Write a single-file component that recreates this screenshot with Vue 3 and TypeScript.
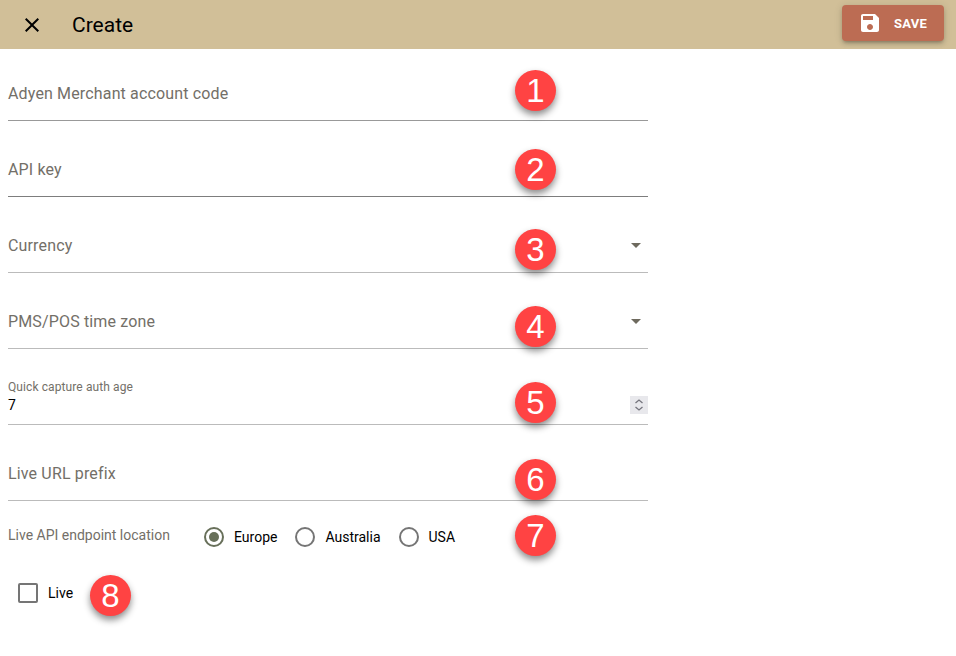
<script setup lang="ts">
interface Field {
  label: string;
  kind: 'text' | 'select' | 'number';
  line: string;
  badge: number;
  badgeBottom: number;
}

const fields: Field[] = [
  { label: 'Adyen Merchant account code', kind: 'text', line: 'mid', badge: 1, badgeBottom: 9 },
  { label: 'API key', kind: 'text', line: 'dark', badge: 2, badgeBottom: 6 },
  { label: 'Currency', kind: 'select', line: 'light', badge: 3, badgeBottom: 2 },
  { label: 'PMS/POS time zone', kind: 'select', line: 'light', badge: 4, badgeBottom: 1 },
  { label: 'Quick capture auth age', kind: 'number', line: 'light', badge: 5, badgeBottom: 1 },
  { label: 'Live URL prefix', kind: 'text', line: 'light', badge: 6, badgeBottom: 0 },
];

const locations = ['Europe', 'Australia', 'USA'];
</script>

<template>
  <div class="page">
    <header class="bar">
      <svg class="close" viewBox="0 0 24 24" width="24" height="24">
        <path d="M19 6.41 17.59 5 12 10.59 6.41 5 5 6.41 10.59 12 5 17.59 6.41 19 12 13.41 17.59 19 19 17.59 13.41 12z" />
      </svg>
      <h1>Create</h1>
      <button class="save">
        <svg viewBox="0 0 24 24" width="24" height="24">
          <path d="M17 3H5c-1.11 0-2 .9-2 2v14c0 1.100.89 2 2 2h14c1.100 0 2-.9 2-2V7l-4-4zm-5 16c-1.660 0-3-1.340-3-3s1.340-3 3-3 3 1.340 3 3-1.340 3-3 3zm3-10H5V5h10v4z" />
        </svg>
        <span>SAVE</span>
      </button>
    </header>

    <form class="form" @submit.prevent>
      <div v-for="f in fields" :key="f.badge" class="field" :class="f.line">
        <template v-if="f.kind === 'number'">
          <div class="stack">
            <label class="small">{{ f.label }}</label>
            <span class="value">7</span>
          </div>
          <span class="spinner">
            <svg viewBox="0 0 18 18" width="18" height="18">
              <path d="M5.500 7 9 4 12.500 7M5.500 11 9 14 12.500 11" />
            </svg>
          </span>
        </template>
        <template v-else>
          <label class="big">{{ f.label }}</label>
          <i v-if="f.kind === 'select'" class="caret"></i>
        </template>
        <b class="badge" :style="{ bottom: f.badgeBottom + 'px' }">{{ f.badge }}</b>
      </div>

      <div class="radios">
        <span class="group-label">Live API endpoint location</span>
        <span v-for="(loc, i) in locations" :key="loc" class="radio">
          <i class="ring" :class="{ on: i === 0 }"></i>{{ loc }}
        </span>
        <b class="badge">7</b>
      </div>

      <div class="live">
        <i class="box"></i>
        <span>Live</span>
        <b class="badge">8</b>
      </div>
    </form>
  </div>
</template>

<style>
html,
body {
  margin: 0;
  background: #fff;
}
</style>

<style scoped>
.page {
  width: 956px;
  height: 656px;
  overflow: hidden;
  font-family: Roboto, "Liberation Sans", sans-serif;
  color: #000;
}
.bar {
  height: 49px;
  background: #d1bf98;
  display: flex;
  align-items: center;
  padding: 0 12px 0 20px;
  box-sizing: border-box;
}
.close {
  fill: #000;
}
h1 {
  margin: 0 0 0 28px;
  font-size: 21px;
  font-weight: 400;
  line-height: 24px;
  flex: 1;
}
.save {
  width: 102px;
  height: 36px;
  margin-top: -3px;
  border: 0;
  border-radius: 4px;
  background: #bc6c53;
  color: #fff;
  display: flex;
  align-items: center;
  padding: 0 0 0 16px;
  gap: 12px;
  font: 700 13px Roboto, sans-serif;
  letter-spacing: 0.3px;
  box-shadow: 0 3px 3px -2px rgba(0, 0, 0, .2), 0 3px 4px rgba(0, 0, 0, .14), 0 1px 8px rgba(0, 0, 0, .12);
}
.save svg {
  fill: #fff;
}
.form {
  width: 640px;
  margin-left: 8px;
  position: relative;
}
.field {
  height: 76px;
  box-sizing: border-box;
  border-bottom: 1px solid #bbb;
  display: flex;
  align-items: flex-end;
  justify-content: space-between;
  padding-bottom: 16px;
  position: relative;
}
.field:first-child {
  height: 72px;
}
.field.mid {
  border-bottom-color: #999;
}
.field.dark {
  border-bottom-color: #7d7d7d;
}
.big {
  font-size: 16px;
  line-height: 20px;
  letter-spacing: 0.15px;
  color: #736f68;
}
.stack {
  display: flex;
  flex-direction: column;
  margin-bottom: -8px;
}
.small {
  font-size: 12px;
  line-height: 14px;
  letter-spacing: 0.1px;
  color: #736f68;
}
.value {
  font-size: 14px;
  line-height: 22px;
}
.caret {
  width: 0;
  height: 0;
  border: 5px solid transparent;
  border-top-color: #6e6a5e;
  border-bottom: 0;
  margin: 0 7px 8px 0;
}
.spinner {
  width: 18px;
  height: 18px;
  background: #e8e8ec;
  margin-bottom: -6px;
}
.spinner svg {
  display: block;
  fill: none;
  stroke: #75757d;
  stroke-width: 1.300;
}
.badge {
  position: absolute;
  left: 507px;
  width: 41px;
  height: 41px;
  border-radius: 50%;
  background: #ff4343;
  color: #fff;
  font: 400 33px/41px "Liberation Sans", Arial, sans-serif;
  text-align: center;
  box-shadow: 0 4px 7px rgba(0, 0, 0, .45);
}
.radios {
  height: 73px;
  margin-top: -1px;
  display: flex;
  align-items: center;
  position: relative;
  font-size: 14px;
}
.group-label {
  width: 196px;
  font-size: 14px;
  color: #736f68;
  margin-top: -3px;
}
.radio {
  display: flex;
  align-items: center;
  gap: 10px;
  margin-right: 18px;
}
.ring {
  width: 20px;
  height: 20px;
  box-sizing: border-box;
  border: 2px solid #757575;
  border-radius: 50%;
  display: block;
  position: relative;
}
.ring.on {
  border-color: #68705a;
}
.ring.on::after {
  content: "";
  position: absolute;
  inset: 3px;
  border-radius: 50%;
  background: #68705a;
}
.radios .badge {
  top: 15px;
}
.live {
  display: flex;
  align-items: center;
  position: relative;
  height: 41px;
  padding-left: 10px;
  font-size: 14px;
  margin-top: -1px;
  gap: 10px;
}
.box {
  width: 20px;
  height: 20px;
  box-sizing: border-box;
  border: 2px solid #757575;
  border-radius: 2px;
  display: block;
}
.live .badge {
  left: 82px;
  top: 3px;
}
</style>
